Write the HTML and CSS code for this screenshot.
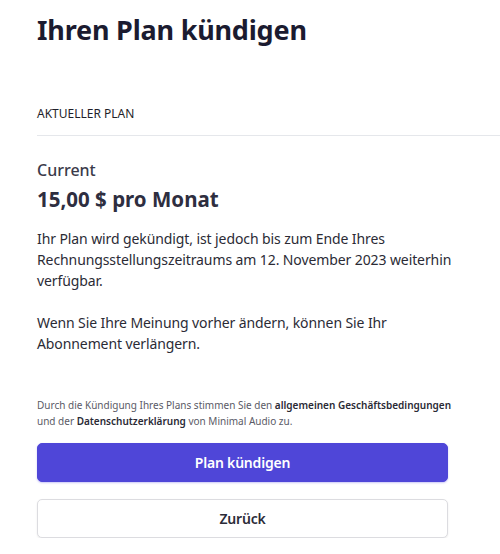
FILE: index.html
```html
<!DOCTYPE html>
<html lang="de">
<head>
<meta charset="utf-8">
<title>Ihren Plan kündigen</title>
<link rel="stylesheet" href="styles.css">
</head>
<body>
<main class="page">
  <h1 class="title">Ihren Plan kündigen</h1>
  <section class="section">
    <div class="section-head">AKTUELLER PLAN</div>
    <div class="plan">
      <div class="plan-name">Current</div>
      <div class="plan-price">15,00 $ pro Monat</div>
      <p class="plan-text">Ihr Plan wird gekündigt, ist jedoch bis zum Ende Ihres Rechnungsstellungszeitraums am 12. November 2023 weiterhin verfügbar.</p>
      <p class="plan-text">Wenn Sie Ihre Meinung vorher ändern, können Sie Ihr Abonnement verlängern.</p>
    </div>
  </section>
  <p class="terms">Durch die Kündigung Ihres Plans stimmen Sie den <strong>allgemeinen Geschäftsbedingungen</strong> und der <strong>Datenschutzerklärung</strong> von Minimal Audio zu.</p>
  <div class="actions">
    <button class="btn btn-primary" type="button">Plan kündigen</button>
    <button class="btn btn-secondary" type="button">Zurück</button>
  </div>
</main>
</body>
</html>
```

FILE: styles.css
```css
* { box-sizing: border-box; }
html, body { margin: 0; padding: 0; background: #fff; }
body {
  font-family: "Noto Sans", "Open Sans", "Liberation Sans", sans-serif;
  color: #1f2937;
  overflow: hidden;
}
.page {
  padding: 10px 0 0 37px;
}
.title {
  margin: 0;
  font-size: 27px;
  line-height: 40px;
  font-weight: 700;
  color: #1b1b30;
  letter-spacing: -0.2px;
}
.section {
  margin-top: 56px;
}
.section-head {
  font-size: 12px;
  line-height: 16px;
  color: #1f1f2a;
  padding-bottom: 13px;
  border-bottom: 1px solid #e5e7eb;
}
.plan {
  width: 411px;
  padding-top: 23px;
}
.plan-name {
  font-size: 16px;
  line-height: 22px;
  font-weight: 500;
  color: #3b3b4a;
}
.plan-price {
  margin-top: 4px;
  font-size: 20.5px;
  line-height: 28px;
  font-weight: 700;
  color: #2e2e40;
}
.plan-text {
  width: 420px;
  margin: 15px 0 0;
  font-size: 14px;
  line-height: 21px;
  letter-spacing: -0.1px;
  color: #2b2b35;
}
.plan-text + .plan-text {
  margin-top: 21px;
}
.terms {
  width: 430px;
  margin: 43px 0 0;
  font-size: 10px;
  line-height: 16px;
  color: #5a5a66;
}
.terms strong {
  font-weight: 600;
  color: #2a2a35;
}
.actions {
  width: 411px;
  margin-top: 14px;
  display: flex;
  flex-direction: column;
  gap: 17px;
}
.btn {
  height: 39px;
  border-radius: 5px;
  font-family: inherit;
  font-size: 14px;
  font-weight: 600;
  letter-spacing: -0.2px;
  cursor: pointer;
}
.btn-primary {
  background: #4f46d8;
  color: #fff;
  border: 1px solid #4f46d8;
  box-shadow: 0 1px 2px rgba(79, 70, 229, 0.3);
}
.btn-secondary {
  background: #fff;
  color: #2b2b38;
  border: 1px solid #dcdce0;
  box-shadow: 0 1px 2px rgba(0, 0, 0, 0.08);
}
```
